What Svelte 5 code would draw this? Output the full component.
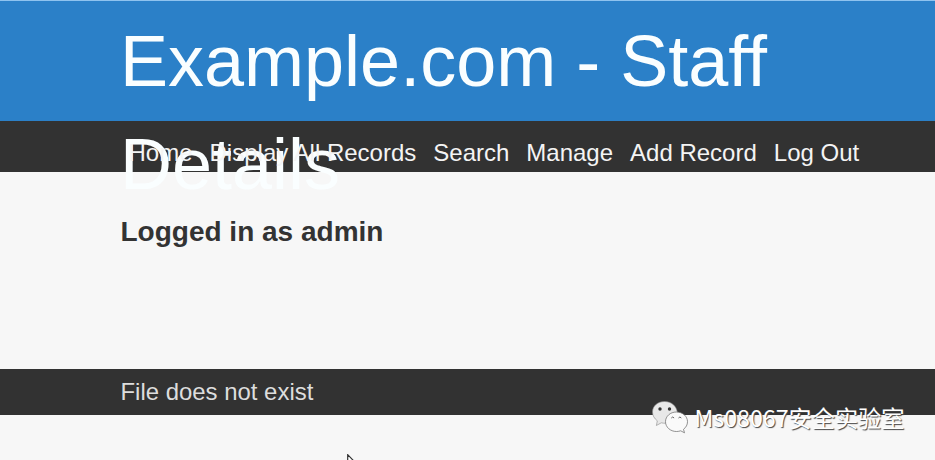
<script>
  const links = ['Home', 'Display All Records', 'Search', 'Manage', 'Add Record', 'Log Out'];
</script>

<div class="page">
  <header><h1>Example.com - Staff Details</h1></header>
  <nav>
    {#each links as link}
      <span class="link">{link}</span>
    {/each}
  </nav>
  <main><h2>Logged in as admin</h2></main>
  <footer>File does not exist</footer>

  <div class="watermark">
    <svg width="38" height="34" viewBox="0 0 38 34">
      <path d="M13.500 1.500C6.700 1.500 1.500 6 1.500 12c0 3.600 1.800 6.500 4.800 8.800L5.400 25.500l4.900-2.700c1.500.4 3 .5 4.500.4L26.300 12C25.300 6 20.500 1.500 13.500 1.500Z" fill="#e8e8e8" stroke="#888" stroke-width=".6" />
      <circle cx="9" cy="9" r="1.700" fill="#333" />
      <circle cx="18.500" cy="9" r="1.700" fill="#333" />
      <path d="M25.500 12c-6.200 0-11 4.300-11 9.700s4.800 9.800 11 9.800c1.500 0 2.900-.3 4.200-.7l3.800 2-1-3.500c2.500-1.900 4-4.500 4-7.600 0-5.400-4.900-9.700-11-9.700Z" fill="#fafafa" stroke="#666" stroke-width=".7" />
      <path d="M20.300 18q1.400-2 2.800 0M27.500 18q1.400-2 2.800 0" fill="none" stroke="#555" stroke-width=".9" />
    </svg>
    <span>Ms08067安全实验室</span>
  </div>

  <svg class="cursor" width="12" height="19" viewBox="0 0 12 19">
    <path d="M.7.7v15l3.500-3.200 2.400 5.300 2.300-1-2.400-5.200h4.800Z" fill="#fff" stroke="#333" stroke-width="1.200" />
  </svg>
</div>

<style>
  :global(body) { margin: 0; overflow: hidden; }
  .page {
    position: relative;
    height: 460px;
    overflow: hidden;
    background: #f7f7f7;
    font-family: "Liberation Sans", Arial, sans-serif;
    font-size: 24px;
  }
  header {
    position: relative;
    z-index: 1;
    box-sizing: border-box;
    height: 121px;
    padding: 9px 120px 0 120px;
    border-top: 1px solid #8fc3ef;
    background: #2b80c8;
  }
  h1 {
    margin: 0;
    color: #fafeff;
    font-size: 72px;
    font-weight: 400;
    line-height: 103px;
  }
  nav {
    display: flex;
    align-items: flex-start;
    box-sizing: border-box;
    height: 51px;
    padding: 18px 0 0 128.500px;
    gap: 17px;
    background: #323232;
    color: #f4f4f4;
    font-size: 24px;
    line-height: 28px;
    white-space: nowrap;
  }
  .link { position: relative; z-index: 2; }
  main { height: 197px; padding: 0 120.500px; box-sizing: border-box; }
  h2 {
    margin: 0;
    padding-top: 43px;
    color: #333;
    font-size: 28px;
    line-height: 34px;
  }
  footer {
    box-sizing: border-box;
    height: 46px;
    padding: 9px 120.500px 0;
    background: #323232;
    color: #ddd;
    font-size: 23.930px;
    line-height: 28px;
  }
  .watermark {
    position: absolute;
    left: 651px;
    top: 400px;
    display: flex;
    align-items: center;
    gap: 5.500px;
    height: 34px;
    color: #fff;
    font: 23.200px/34px "Noto Sans CJK SC", sans-serif;
    text-shadow: 1px 1px 1px #444;
    white-space: nowrap;
  }
  .cursor { position: absolute; left: 347px; top: 454px; }
</style>
